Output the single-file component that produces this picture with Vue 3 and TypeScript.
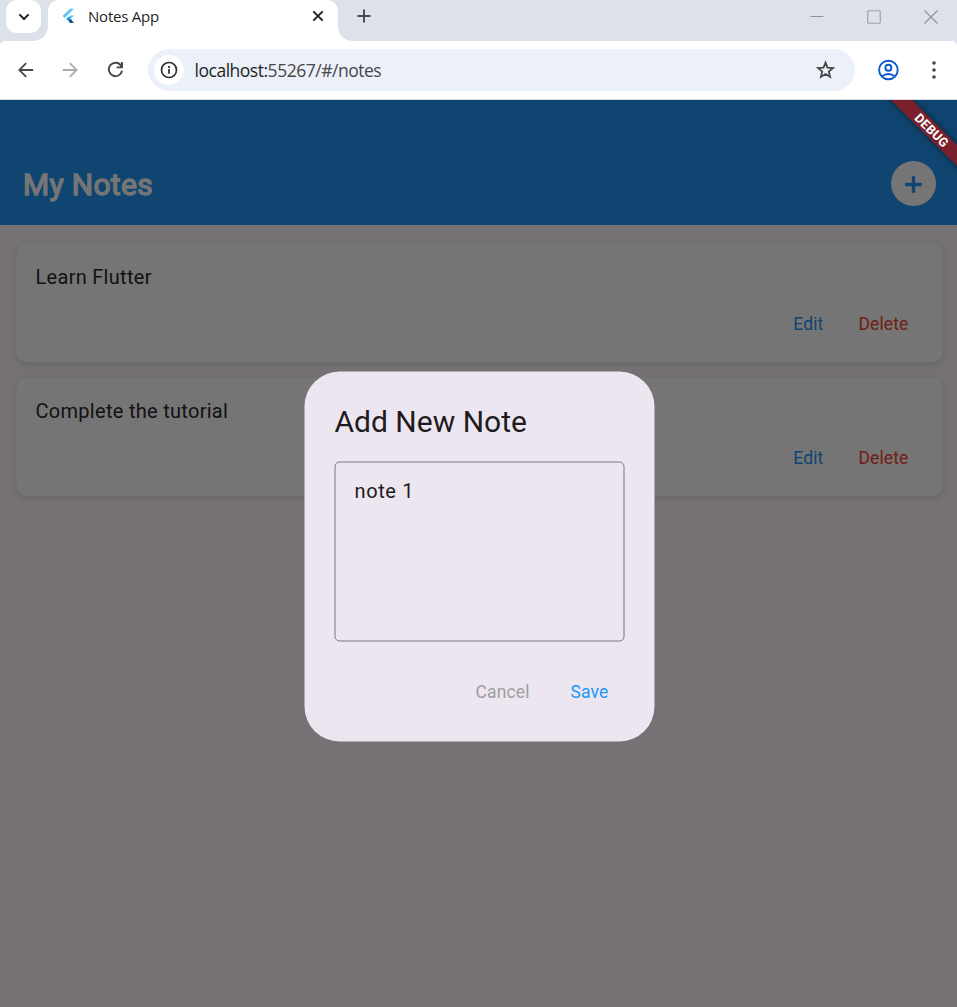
<script setup lang="ts">
import { ref } from 'vue'

interface Note {
  id: number
  text: string
}

const notes = ref<Note[]>([
  { id: 1, text: 'Learn Flutter' },
  { id: 2, text: 'Complete the tutorial' },
])
const draft = ref('note 1')
</script>

<template>
  <div class="window">
    <header class="tabstrip">
      <div class="tab-search">
        <svg width="12" height="8" viewBox="0 0 12 8"><path d="M1.4 1.4 6 6l4.6-4.6" fill="none" stroke="#1f1f1f" stroke-width="2" /></svg>
      </div>
      <div class="tab">
        <svg class="favicon" width="15" height="17" viewBox="0 0 15 17">
          <path d="M8.2.8h3.6L2.6 9.900.6 7.900z" fill="#54c5f8" />
          <path d="M8.4 7.4H12l-3.400 3.400-2.400-1.200z" fill="#54c5f8" />
          <path d="M4.100 11 6.400 8.800l2.200 2-2.200 2.200z" fill="#1ba0e2" />
          <path d="m6.400 13 2.200-2.200 3.400 4.100H8.300z" fill="#01579b" />
        </svg>
        <span class="tab-title">Notes App</span>
        <svg class="tab-close" width="12" height="12" viewBox="0 0 12 12"><path d="m1.3 1.3 9.4 9.4m0-9.4-9.4 9.4" stroke="#1f1f1f" stroke-width="1.9" /></svg>
      </div>
      <svg class="new-tab" width="14" height="14" viewBox="0 0 14 14"><path d="M7 .5v13M.5 7h13" stroke="#444746" stroke-width="1.9" /></svg>
      <div class="controls">
        <svg width="14" height="14" viewBox="0 0 14 14"><path d="M.5 6.5h13" stroke="#909396" /></svg>
        <svg width="14" height="14" viewBox="0 0 14 14"><rect x=".75" y=".75" width="12.5" height="12.5" rx="1" fill="none" stroke="#9da0a4" stroke-width="1.2" /></svg>
        <svg width="14" height="14" viewBox="0 0 14 14"><path d="m.5.5 13 13m0-13-13 13" stroke="#909396" stroke-width="1.1" /></svg>
      </div>
    </header>

    <nav class="toolbar">
      <svg width="16" height="16" viewBox="0 0 16 16"><path d="M15.2 8H1.7M8.2 1.1 1.3 8l6.9 6.9" fill="none" stroke="#474747" stroke-width="1.8" /></svg>
      <svg width="16" height="16" viewBox="0 0 16 16"><path d="M.8 8h13.5M7.8 1.1 14.7 8l-6.9 6.9" fill="none" stroke="#ababab" stroke-width="1.8" /></svg>
      <svg width="17" height="17" viewBox="0 0 17 17"><path d="M14.2 4.9A6.7 6.7 0 1 0 15.1 9.8M15 1v5.4H9.7" fill="none" stroke="#474747" stroke-width="1.9" /></svg>
      <div class="address">
        <span class="site-info">
          <svg width="18" height="18" viewBox="0 0 18 18"><circle cx="9" cy="9" r="7.5" fill="none" stroke="#303134" stroke-width="1.7" /><path d="M9 8v4.7M9 5v1.9" stroke="#303134" stroke-width="1.8" /></svg>
        </span>
        <span class="url"><b>localhost:</b>55267/#/notes</span>
        <svg class="star" width="20" height="20" viewBox="0 0 20 20"><path d="m10.500 2.700 2 5 5.400.4-4.100 3.500 1.300 5.300-4.600-2.800-4.600 2.800 1.300-5.300-4.100-3.500 5.400-.4z" fill="none" stroke="#444746" stroke-width="1.8" /></svg>
      </div>
      <svg class="profile" width="22" height="22" viewBox="0 0 22 22">
        <g fill="none" stroke="#0b57d0" stroke-width="1.9"><circle cx="11.400" cy="11" r="9.3" /><circle cx="11.400" cy="8.800" r="3" /><path d="M5 17.400c3.600-3.200 9.200-3.200 12.800 0" /></g>
      </svg>
      <svg class="more" width="4" height="18" viewBox="0 0 4 18"><g fill="#474747"><circle cx="2" cy="2" r="1.8" /><circle cx="2" cy="9" r="1.8" /><circle cx="2" cy="16" r="1.8" /></g></svg>
    </nav>

    <main class="app">
      <div class="appbar">
        <h1>My Notes</h1>
        <button class="add" aria-label="Add note">
          <svg width="17" height="17" viewBox="0 0 17 17"><path d="M8.500 .3v16.400M.3 8.500h16.400" stroke="#2196f3" stroke-width="3.300" /></svg>
        </button>
      </div>
      <section class="list">
        <article v-for="note in notes" :key="note.id" class="card">
          <p>{{ note.text }}</p>
          <div class="card-actions">
            <button class="edit">Edit</button>
            <button class="delete">Delete</button>
          </div>
        </article>
      </section>

      <div class="scrim">
        <div class="dialog" role="dialog">
          <h2>Add New Note</h2>
          <textarea v-model="draft" spellcheck="false"></textarea>
          <div class="dialog-actions">
            <button class="cancel">Cancel</button>
            <button class="save">Save</button>
          </div>
        </div>
      </div>
      <div class="banner">DEBUG</div>
    </main>
  </div>
</template>

<style>
body {
  margin: 0;
  overflow: hidden;
}
</style>

<style scoped>
* {
  box-sizing: border-box;
}
.window {
  display: flex;
  flex-direction: column;
  width: 957px;
  height: 1007px;
  overflow: hidden;
  background: #dde1e9;
  font-family: Roboto, sans-serif;
}
svg {
  display: block;
  flex: none;
}
button {
  border: 0;
  padding: 0;
  background: none;
  font: 400 17.5px/25px Roboto, sans-serif;
  letter-spacing: 0.125px;
}
.tabstrip {
  display: flex;
  height: 41px;
}
.tab-search {
  display: flex;
  align-items: center;
  justify-content: center;
  width: 35px;
  height: 33px;
  margin-left: 6px;
  background: #fff;
  border-radius: 11px;
}
.tab {
  position: relative;
  display: flex;
  align-items: center;
  width: 290px;
  height: 41px;
  margin-left: 7px;
  padding: 0 14px 9px 14px;
  background: #fff;
  border-radius: 11px 11px 0 0;
}
.tab::before,
.tab::after {
  content: '';
  position: absolute;
  bottom: 0;
  width: 14px;
  height: 14px;
}
.tab::before {
  right: 100%;
  background: radial-gradient(circle at 0 0, transparent 13.5px, #fff 14px);
}
.tab::after {
  left: 100%;
  background: radial-gradient(circle at 100% 0, transparent 13.5px, #fff 14px);
}
.tab-title {
  margin-left: 11px;
  font: 15px/20px 'Open Sans', sans-serif;
  letter-spacing: -0.22px;
  color: #1f1f1f;
}
.tab-close {
  margin-left: auto;
}
.new-tab {
  margin: 9px 0 0 19px;
}
.controls {
  display: flex;
  gap: 43px;
  margin: 10px 19px 0 auto;
}
.toolbar {
  display: flex;
  align-items: center;
  height: 59px;
  padding: 0 21.5px 0 18px;
  background: #fff;
  border-bottom: 1px solid #d9dce1;
  border-radius: 5px 5px 0 0;
}
.toolbar > svg {
  position: relative;
  top: -0.5px;
}
.toolbar > svg + svg {
  margin-left: 28px;
}
.toolbar > svg:nth-child(3) {
  margin-left: 29px;
}
.address {
  display: flex;
  align-items: center;
  width: 707px;
  height: 42px;
  margin-left: 24px;
  padding: 0 20px 0 6px;
  border-radius: 21px;
  background: #ecf0f9;
}
.site-info {
  display: flex;
  align-items: center;
  justify-content: center;
  width: 30px;
  height: 30px;
  border-radius: 50%;
  background: #fff;
}
.url {
  margin-left: 10.5px;
  font: 17.5px/24px 'Open Sans', sans-serif;
  letter-spacing: -0.48px;
  color: #474747;
}
.url b {
  font-weight: 400;
  color: #1f1f1f;
}
.star {
  margin-left: auto;
}
.profile {
  margin-left: 22px;
}
.toolbar > .more {
  margin-left: auto;
}
.app {
  position: relative;
  flex: 1;
  overflow: hidden;
  background: #fef7ff;
}
.appbar {
  display: flex;
  align-items: center;
  justify-content: space-between;
  height: 125px;
  padding: 42px 21px 0 23px;
  background: #2196f3;
}
h1 {
  margin: 2px 0 0;
  font: 400 30px/38px Roboto, sans-serif;
  letter-spacing: 0.3px;
  -webkit-text-stroke: 1.3px #fff;
  color: #fff;
}
.add {
  display: flex;
  align-items: center;
  justify-content: center;
  width: 45px;
  height: 45px;
  padding-top: 1px;
  border-radius: 50%;
  background: #fff;
}
.list {
  display: flex;
  flex-direction: column;
  gap: 15px;
  padding: 18px 14px 0 17px;
}
.card {
  height: 119px;
  padding: 19px 34px 0 19px;
  background: #fff;
  border-radius: 10px;
  box-shadow: 0 2px 6px rgba(0, 0, 0, 0.11);
  transform: translate(-0.5px, 0.3px);
}
.card p {
  margin: 0;
  font-size: 20px;
  line-height: 30px;
  letter-spacing: 0.29px;
  color: #2a292c;
}
.card-actions {
  display: flex;
  justify-content: flex-end;
  gap: 35px;
  margin-top: 20px;
}
.edit,
.save {
  color: #2196f3;
}
.delete {
  color: #f44336;
}
.cancel {
  color: #9e9e9e;
}
.scrim {
  position: absolute;
  inset: 0;
  display: flex;
  justify-content: center;
  align-items: flex-start;
  padding: 272px 0 0 3px;
  background: rgba(0, 0, 0, 0.54);
}
.dialog {
  display: flex;
  flex-direction: column;
  width: 350px;
  height: 370px;
  padding: 30px;
  border-radius: 35px;
  background: #ece6f0;
  transform: translate(-0.5px, -0.5px);
}
h2 {
  margin: 0;
  font: 400 30px/40px Roboto, sans-serif;
  color: #1d1b20;
}
textarea {
  width: 290px;
  height: 180px;
  margin-top: 20px;
  padding: 13px 19px;
  border: 1.250px solid #79747e;
  border-radius: 5px;
  outline: 0;
  resize: none;
  background: transparent;
  font: 20px/30px Roboto, sans-serif;
  letter-spacing: 0.625px;
  color: #1d1b20;
}
.dialog-actions {
  display: flex;
  justify-content: flex-end;
  gap: 41px;
  margin-top: 38px;
  padding-right: 16px;
}
.banner {
  position: absolute;
  top: 20.5px;
  right: -72.5px;
  width: 200px;
  height: 15px;
  transform: rotate(45deg);
  background: #7a202b;
  box-shadow: 0 0 7px rgba(0, 0, 0, 0.5);
  font: 700 12.75px/15px Roboto, sans-serif;
  letter-spacing: 0.2px;
  text-indent: 5px;
  text-align: center;
  color: #fff;
}
</style>
